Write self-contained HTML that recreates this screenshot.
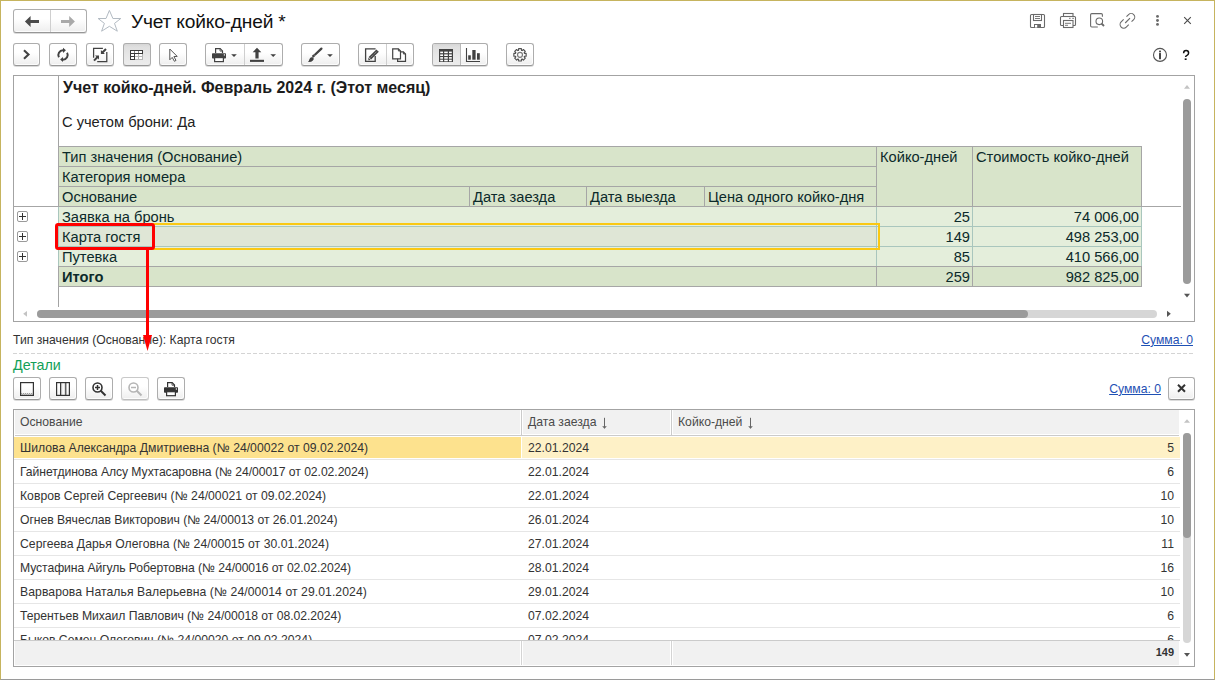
<!DOCTYPE html><html><head><meta charset="utf-8"><style>
*{box-sizing:border-box;margin:0;padding:0}
html,body{width:1215px;height:680px;overflow:hidden;background:#fff;font-family:"Liberation Sans",sans-serif}
.a{position:absolute}
#win{position:absolute;left:0;top:0;width:1215px;height:680px;border-left:1px solid #c6b45e;border-top:1px solid #c6b45e;border-right:1px solid #c6b45e;border-bottom:1px solid #9a9a9a}
.btn{position:absolute;height:23px;border:1px solid #adadad;border-bottom-color:#979797;border-radius:3px;background:linear-gradient(#fff 0,#fff 40%,#eeeeee 100%);box-shadow:inset -1px -1px 0 rgba(255,255,255,.8),0 1px 0 rgba(0,0,0,.14)}
.btn.dis{border-color:#c9c9c9;border-bottom-color:#bdbdbd}
.btn.on{background:linear-gradient(#d6d6d6 0,#dfdfdf 3px,#e6e6e6 50%,#ececec 100%);box-shadow:0 1px 0 rgba(0,0,0,.14)}
.sep{position:absolute;top:0;bottom:0;width:1px;background:#cfcfcf}
.t{position:absolute;white-space:nowrap;line-height:1}
#ov{position:absolute;left:0;top:0}
</style></head><body>
<div id="win"></div>
<div class="btn " style="left:13px;top:9px;width:74px;height:24px"><div class="sep" style="left:36px"></div></div>
<div class="t" style="left:131px;top:11.95px;font-size:19.2px;color:#111;font-weight:400;letter-spacing:-0.2px">Учет койко-дней *</div>
<div class="btn " style="left:13px;top:43px;width:27px;height:23px"></div>
<div class="btn " style="left:49px;top:43px;width:28px;height:23px"></div>
<div class="btn " style="left:86px;top:43px;width:28px;height:23px"></div>
<div class="btn on" style="left:123px;top:43px;width:28px;height:23px"></div>
<div class="btn " style="left:159px;top:43px;width:28px;height:23px"></div>
<div class="btn " style="left:205px;top:43px;width:78px;height:23px"><div class="sep" style="left:38px"></div></div>
<div class="btn " style="left:301px;top:43px;width:39px;height:23px"></div>
<div class="btn " style="left:358px;top:43px;width:56px;height:23px"><div class="sep" style="left:27px"></div></div>
<div class="btn " style="left:432px;top:43px;width:56px;height:23px"><div class="a" style="left:0;top:0;width:27px;height:21px;background:linear-gradient(#d6d6d6 0,#dfdfdf 3px,#e6e6e6 50%,#ececec 100%);border-radius:2px 0 0 2px"></div><div class="sep" style="left:27px;background:#b9b9b9"></div></div>
<div class="btn " style="left:506px;top:43px;width:28px;height:23px"></div>
<div class="a" style="left:13px;top:75px;width:1182px;height:247px;background:#fff;border:1px solid #a3a3a3"></div>
<div class="a" style="left:58px;top:76px;width:1px;height:231px;background:#a3a3a3;"></div>
<div class="t" style="left:63px;top:79.66px;font-size:16px;color:#1c1c1c;font-weight:700;">Учет койко-дней. Февраль 2024 г. (Этот месяц)</div>
<div class="t" style="left:62px;top:114.58px;font-size:14.67px;color:#222;font-weight:400;">С учетом брони: Да</div>
<div class="a" style="left:58px;top:146px;width:1084px;height:141px;background:#d8e4ca;"></div>
<div class="a" style="left:58px;top:146px;width:1084px;height:1px;background:#a6a6a6;"></div>
<div class="a" style="left:13px;top:206px;width:1168px;height:1px;background:#a6a6a6;"></div>
<div class="a" style="left:58px;top:166px;width:818px;height:1px;background:#a6a6a6;"></div>
<div class="a" style="left:58px;top:186px;width:818px;height:1px;background:#a6a6a6;"></div>
<div class="a" style="left:58px;top:146px;width:1px;height:60px;background:#a6a6a6;"></div>
<div class="a" style="left:876px;top:146px;width:1px;height:60px;background:#a6a6a6;"></div>
<div class="a" style="left:972px;top:146px;width:1px;height:60px;background:#a6a6a6;"></div>
<div class="a" style="left:1141px;top:146px;width:1px;height:60px;background:#a6a6a6;"></div>
<div class="a" style="left:469px;top:186px;width:1px;height:20px;background:#a6a6a6;"></div>
<div class="a" style="left:586px;top:186px;width:1px;height:20px;background:#a6a6a6;"></div>
<div class="a" style="left:704px;top:186px;width:1px;height:20px;background:#a6a6a6;"></div>
<div class="t" style="left:62px;top:149.58px;font-size:14.67px;color:#0c2a2a;font-weight:400;">Тип значения (Основание)</div>
<div class="t" style="left:62px;top:169.58px;font-size:14.67px;color:#0c2a2a;font-weight:400;">Категория номера</div>
<div class="t" style="left:62px;top:189.58px;font-size:14.67px;color:#0c2a2a;font-weight:400;">Основание</div>
<div class="t" style="left:473px;top:189.58px;font-size:14.67px;color:#0c2a2a;font-weight:400;">Дата заезда</div>
<div class="t" style="left:590px;top:189.58px;font-size:14.67px;color:#0c2a2a;font-weight:400;">Дата выезда</div>
<div class="t" style="left:708px;top:189.58px;font-size:14.67px;color:#0c2a2a;font-weight:400;">Цена одного койко-дня</div>
<div class="t" style="left:880px;top:149.58px;font-size:14.67px;color:#0c2a2a;font-weight:400;">Койко-дней</div>
<div class="t" style="left:976px;top:149.58px;font-size:14.67px;color:#0c2a2a;font-weight:400;">Стоимость койко-дней</div>
<div class="a" style="left:59px;top:207px;width:1082px;height:59px;background:#e4eedb;"></div>
<div class="a" style="left:59px;top:227px;width:817px;height:19px;background:#dfe6d6;"></div>
<div class="a" style="left:58px;top:226px;width:1083px;height:1px;background:#a9c6bd;"></div>
<div class="a" style="left:58px;top:246px;width:1083px;height:1px;background:#a9c6bd;"></div>
<div class="a" style="left:58px;top:207px;width:1px;height:59px;background:#a9c6bd;"></div>
<div class="a" style="left:876px;top:207px;width:1px;height:59px;background:#a9c6bd;"></div>
<div class="a" style="left:972px;top:207px;width:1px;height:59px;background:#a9c6bd;"></div>
<div class="a" style="left:1141px;top:207px;width:1px;height:59px;background:#a9c6bd;"></div>
<div class="a" style="left:58px;top:266px;width:1084px;height:1px;background:#a6a6a6;"></div>
<div class="a" style="left:58px;top:286px;width:1084px;height:1px;background:#a6a6a6;"></div>
<div class="a" style="left:58px;top:266px;width:1px;height:20px;background:#a6a6a6;"></div>
<div class="a" style="left:876px;top:266px;width:1px;height:20px;background:#a6a6a6;"></div>
<div class="a" style="left:972px;top:266px;width:1px;height:20px;background:#a6a6a6;"></div>
<div class="a" style="left:1141px;top:266px;width:1px;height:20px;background:#a6a6a6;"></div>
<div class="t" style="left:62px;top:209.58px;font-size:14.67px;color:#0c2a2a;font-weight:400;">Заявка на бронь</div>
<div class="t" style="right:245px;top:209.58px;font-size:14.67px;color:#0c2a2a;font-weight:400;">25</div>
<div class="t" style="right:76px;top:209.58px;font-size:14.67px;color:#0c2a2a;font-weight:400;">74 006,00</div>
<div class="a" style="left:17px;top:211px;width:11px;height:11px;border:1px solid #9a9a9a;border-radius:2px;background:#fff"></div>
<div class="a" style="left:19px;top:216px;width:7px;height:1px;background:#333;"></div>
<div class="a" style="left:22px;top:213px;width:1px;height:7px;background:#333;"></div>
<div class="t" style="left:62px;top:229.58px;font-size:14.67px;color:#0c2a2a;font-weight:400;">Карта гостя</div>
<div class="t" style="right:245px;top:229.58px;font-size:14.67px;color:#0c2a2a;font-weight:400;">149</div>
<div class="t" style="right:76px;top:229.58px;font-size:14.67px;color:#0c2a2a;font-weight:400;">498 253,00</div>
<div class="a" style="left:17px;top:231px;width:11px;height:11px;border:1px solid #9a9a9a;border-radius:2px;background:#fff"></div>
<div class="a" style="left:19px;top:236px;width:7px;height:1px;background:#333;"></div>
<div class="a" style="left:22px;top:233px;width:1px;height:7px;background:#333;"></div>
<div class="t" style="left:62px;top:249.58px;font-size:14.67px;color:#0c2a2a;font-weight:400;">Путевка</div>
<div class="t" style="right:245px;top:249.58px;font-size:14.67px;color:#0c2a2a;font-weight:400;">85</div>
<div class="t" style="right:76px;top:249.58px;font-size:14.67px;color:#0c2a2a;font-weight:400;">410 566,00</div>
<div class="a" style="left:17px;top:251px;width:11px;height:11px;border:1px solid #9a9a9a;border-radius:2px;background:#fff"></div>
<div class="a" style="left:19px;top:256px;width:7px;height:1px;background:#333;"></div>
<div class="a" style="left:22px;top:253px;width:1px;height:7px;background:#333;"></div>
<div class="t" style="left:62px;top:269.58px;font-size:14.67px;color:#0c2a2a;font-weight:700;">Итого</div>
<div class="t" style="right:245px;top:269.58px;font-size:14.67px;color:#0c2a2a;font-weight:400;">259</div>
<div class="t" style="right:76px;top:269.58px;font-size:14.67px;color:#0c2a2a;font-weight:400;">982 825,00</div>
<div class="a" style="left:57px;top:223px;width:823px;height:27px;border:2px solid #fac814;border-left:none"></div>
<div class="a" style="left:1183px;top:99px;width:8px;height:185px;background:#9b9b9b;border-radius:4px"></div>
<div class="a" style="left:37px;top:310px;width:1120px;height:8px;background:#d6d6d6;border-radius:4px"></div>
<div class="a" style="left:37px;top:310px;width:991px;height:8px;background:#9b9b9b;border-radius:4px"></div>
<div class="t" style="left:13px;top:333.67px;font-size:12.2px;color:#333;font-weight:400;">Тип значения (Основание): Карта гостя</div>
<div class="t" style="right:22px;top:333.67px;font-size:12.2px;color:#1e50b4;font-weight:400;text-decoration:underline">Сумма: 0</div>
<div class="a" style="left:13px;top:353px;width:1181px;height:1px;background:repeating-linear-gradient(90deg,#d4d4d4 0,#d4d4d4 4px,transparent 4px,transparent 6px);"></div>
<div class="t" style="left:13px;top:358.40px;font-size:14.3px;color:#12a058;font-weight:400;">Детали</div>
<div class="btn " style="left:13px;top:377px;width:28px;height:23px"></div>
<div class="btn " style="left:49px;top:377px;width:28px;height:23px"></div>
<div class="btn " style="left:85px;top:377px;width:28px;height:23px"></div>
<div class="btn dis" style="left:121px;top:377px;width:28px;height:23px"></div>
<div class="btn " style="left:157px;top:377px;width:28px;height:23px"></div>
<div class="t" style="right:54px;top:382.67px;font-size:12.2px;color:#1e50b4;font-weight:400;text-decoration:underline">Сумма: 0</div>
<div class="btn " style="left:1168px;top:377px;width:27px;height:23px"></div>
<div class="a" style="left:13px;top:409px;width:1182px;height:258px;background:#fff;border:1px solid #a3a3a3"></div>
<div class="a" style="left:15px;top:410px;width:1164px;height:24px;background:#f1f1f1;"></div>
<div class="a" style="left:15px;top:435px;width:1164px;height:1px;background:#cbcbcb;"></div>
<div class="a" style="left:520px;top:410px;width:3px;height:25px;background:#fff;"></div>
<div class="a" style="left:521px;top:410px;width:1px;height:25px;background:#cbcbcb;"></div>
<div class="a" style="left:670px;top:410px;width:3px;height:25px;background:#fff;"></div>
<div class="a" style="left:671px;top:410px;width:1px;height:25px;background:#cbcbcb;"></div>
<div class="t" style="left:20px;top:415.67px;font-size:12.2px;color:#4a4a4a;font-weight:400;">Основание</div>
<div class="t" style="left:528px;top:415.67px;font-size:12.2px;color:#4a4a4a;font-weight:400;">Дата заезда</div>
<div class="t" style="left:678px;top:415.67px;font-size:12.2px;color:#4a4a4a;font-weight:400;">Койко-дней</div>
<div class="a" style="left:14px;top:436px;width:1166px;height:204px;overflow:hidden">
<div class="a" style="left:0;top:1px;width:507px;height:21px;background:#fde28e"></div>
<div class="a" style="left:508px;top:1px;width:658px;height:21px;background:#fef1c7"></div>
<div class="a" style="left:0;top:23px;width:1166px;height:1px;background:#e6e6e6"></div>
<div class="t" style="left:6px;top:5.67px;font-size:12.2px;color:#333;letter-spacing:0.007px">Шилова Александра Дмитриевна (№ 24/00022 от 09.02.2024)</div>
<div class="t" style="left:514px;top:5.67px;font-size:12.2px;color:#333">22.01.2024</div>
<div class="t" style="right:6px;top:5.67px;font-size:12.2px;color:#333">5</div>
<div class="a" style="left:0;top:47px;width:1166px;height:1px;background:#e6e6e6"></div>
<div class="t" style="left:6px;top:29.67px;font-size:12.2px;color:#333;letter-spacing:-0.064px">Гайнетдинова Алсу Мухтасаровна (№ 24/00017 от 02.02.2024)</div>
<div class="t" style="left:514px;top:29.67px;font-size:12.2px;color:#333">22.01.2024</div>
<div class="t" style="right:6px;top:29.67px;font-size:12.2px;color:#333">6</div>
<div class="a" style="left:0;top:71px;width:1166px;height:1px;background:#e6e6e6"></div>
<div class="t" style="left:6px;top:53.67px;font-size:12.2px;color:#333;letter-spacing:0.008px">Ковров Сергей Сергеевич (№ 24/00021 от 09.02.2024)</div>
<div class="t" style="left:514px;top:53.67px;font-size:12.2px;color:#333">22.01.2024</div>
<div class="t" style="right:6px;top:53.67px;font-size:12.2px;color:#333">10</div>
<div class="a" style="left:0;top:95px;width:1166px;height:1px;background:#e6e6e6"></div>
<div class="t" style="left:6px;top:77.67px;font-size:12.2px;color:#333;letter-spacing:-0.035px">Огнев Вячеслав Викторович (№ 24/00013 от 26.01.2024)</div>
<div class="t" style="left:514px;top:77.67px;font-size:12.2px;color:#333">26.01.2024</div>
<div class="t" style="right:6px;top:77.67px;font-size:12.2px;color:#333">10</div>
<div class="a" style="left:0;top:119px;width:1166px;height:1px;background:#e6e6e6"></div>
<div class="t" style="left:6px;top:101.67px;font-size:12.2px;color:#333;letter-spacing:0.029px">Сергеева Дарья Олеговна (№ 24/00015 от 30.01.2024)</div>
<div class="t" style="left:514px;top:101.67px;font-size:12.2px;color:#333">27.01.2024</div>
<div class="t" style="right:6px;top:101.67px;font-size:12.2px;color:#333">11</div>
<div class="a" style="left:0;top:143px;width:1166px;height:1px;background:#e6e6e6"></div>
<div class="t" style="left:6px;top:125.67px;font-size:12.2px;color:#333;letter-spacing:-0.087px">Мустафина Айгуль Робертовна (№ 24/00016 от 02.02.2024)</div>
<div class="t" style="left:514px;top:125.67px;font-size:12.2px;color:#333">28.01.2024</div>
<div class="t" style="right:6px;top:125.67px;font-size:12.2px;color:#333">16</div>
<div class="a" style="left:0;top:167px;width:1166px;height:1px;background:#e6e6e6"></div>
<div class="t" style="left:6px;top:149.67px;font-size:12.2px;color:#333;letter-spacing:0.067px">Варварова Наталья Валерьевна (№ 24/00014 от 29.01.2024)</div>
<div class="t" style="left:514px;top:149.67px;font-size:12.2px;color:#333">29.01.2024</div>
<div class="t" style="right:6px;top:149.67px;font-size:12.2px;color:#333">10</div>
<div class="a" style="left:0;top:191px;width:1166px;height:1px;background:#e6e6e6"></div>
<div class="t" style="left:6px;top:173.67px;font-size:12.2px;color:#333;letter-spacing:-0.041px">Терентьев Михаил Павлович (№ 24/00018 от 08.02.2024)</div>
<div class="t" style="left:514px;top:173.67px;font-size:12.2px;color:#333">07.02.2024</div>
<div class="t" style="right:6px;top:173.67px;font-size:12.2px;color:#333">6</div>
<div class="a" style="left:0;top:215px;width:1166px;height:1px;background:#e6e6e6"></div>
<div class="t" style="left:6px;top:197.67px;font-size:12.2px;color:#333;letter-spacing:0.000px">Быков Семен Олегович (№ 24/00020 от 09.02.2024)</div>
<div class="t" style="left:514px;top:197.67px;font-size:12.2px;color:#333">07.02.2024</div>
<div class="t" style="right:6px;top:197.67px;font-size:12.2px;color:#333">6</div>
</div>
<div class="a" style="left:14px;top:640px;width:1166px;height:1px;background:#cbcbcb;"></div>
<div class="a" style="left:15px;top:641px;width:1164px;height:24px;background:#f1f1f1;"></div>
<div class="a" style="left:520px;top:641px;width:3px;height:24px;background:#fff;"></div>
<div class="a" style="left:521px;top:641px;width:1px;height:24px;background:#d4d4d4;"></div>
<div class="a" style="left:670px;top:641px;width:3px;height:24px;background:#fff;"></div>
<div class="a" style="left:671px;top:641px;width:1px;height:24px;background:#d4d4d4;"></div>
<div class="t" style="right:41px;top:646.69px;font-size:11px;color:#333;font-weight:700;">149</div>
<div class="a" style="left:1183px;top:433px;width:8px;height:210px;background:#d6d6d6;border-radius:4px"></div>
<div class="a" style="left:1183px;top:433px;width:8px;height:105px;background:#9b9b9b;border-radius:4px"></div>
<svg id="ov" width="1215" height="680" viewBox="0 0 1215 680"><path d="M24.9 21.4 L30.6 15.9 V19.9 H39 V22.9 H30.6 V26.9 Z" fill="#4b4b4b"/><path d="M74.9 21.4 L69.2 15.9 V19.9 H61 V22.9 H69.2 V26.9 Z" fill="#a9a9a9"/><path d="M109.4 10.4 L112.9 18.5 L120.8 18.5 L114.5 23.4 L117.3 31.2 L109.4 26.3 L101.6 31.2 L104.4 23.4 L98.1 18.5 L106 18.5 Z" fill="none" stroke="#b3bbc3" stroke-width="1" stroke-linejoin="round"/><path d="M1030.5 15.5 Q1030.5 14.5 1031.5 14.5 H1043.5 Q1044.5 14.5 1044.5 15.5 V26.5 Q1044.5 27.5 1043.5 27.5 H1031.5 Q1030.5 27.5 1030.5 26.5 Z" fill="none" stroke="#6a6a6a" stroke-width="1.1"/><rect x="1033.5" y="14.5" width="8" height="6" fill="none" stroke="#6a6a6a" stroke-width="1.1"/><path d="M1035 16.5 H1040 M1035 18.5 H1040" stroke="#6a6a6a" stroke-width="0.9"/><rect x="1034" y="24" width="7" height="3.5" fill="#6a6a6a"/><rect x="1035" y="25" width="2.2" height="2.5" fill="#fff"/><rect x="1063.5" y="13.5" width="9.5" height="3" fill="none" stroke="#6a6a6a" stroke-width="1.1"/><path d="M1063.5 25.5 H1061.5 Q1060.5 25.5 1060.5 24.5 V17.5 Q1060.5 16.5 1061.5 16.5 H1074.5 Q1075.5 16.5 1075.5 17.5 V24.5 Q1075.5 25.5 1074.5 25.5 H1073" fill="none" stroke="#6a6a6a" stroke-width="1.1"/><rect x="1063.5" y="20.5" width="9.5" height="7" fill="#fff" stroke="#6a6a6a" stroke-width="1.1"/><path d="M1065 23.3 H1071 M1065 25.3 H1068 M1069 18.3 H1070.6 M1072.2 18.3 H1074" stroke="#6a6a6a" stroke-width="0.9"/><path d="M1097.8 27 H1091.8 Q1090.6 27 1090.6 25.8 V14.8 Q1090.6 13.6 1091.8 13.6 H1101.2 Q1102.4 13.6 1102.4 14.8 V16.8" fill="none" stroke="#6a6a6a" stroke-width="1.1"/><circle cx="1099.3" cy="21.3" r="3.3" fill="none" stroke="#6a6a6a" stroke-width="1.1"/><path d="M1101.6 23.6 L1104 26" stroke="#6a6a6a" stroke-width="1.9"/><g transform="translate(1127.6 20.6) rotate(-45)" fill="none" stroke="#6a6a6a" stroke-width="1.1"><path d="M2 -3.6 H5 A3.6 3.6 0 0 1 5 3.6 H2"/><path d="M-2 -3.6 H-5.5 A3.6 3.6 0 0 0 -5.5 3.6 H-2"/><path d="M-3.4 0 H3.4"/></g><circle cx="1157.5" cy="16.4" r="1.45" fill="#6a6a6a"/><circle cx="1157.5" cy="20.5" r="1.45" fill="#6a6a6a"/><circle cx="1157.5" cy="24.4" r="1.45" fill="#6a6a6a"/><path d="M1184.2 17.2 L1190.8 23.8 M1190.8 17.2 L1184.2 23.8" stroke="#4a4a4a" stroke-width="1.1"/><path d="M24 50.3 L28.5 54.5 L24 58.7" fill="none" stroke="#424242" stroke-width="2.1"/><path d="M63.6 50.3 H63 A4.7 4.7 0 0 0 58.93 57.35" fill="none" stroke="#424242" stroke-width="2"/><path d="M63 47.7 V52.9 L65.9 50.3 Z" fill="#424242"/><path d="M62.4 59.7 H63 A4.7 4.7 0 0 0 67.07 52.65" fill="none" stroke="#424242" stroke-width="2"/><path d="M63 56.9 V62.1 L60.1 59.5 Z" fill="#424242"/><path d="M93.6 57.8 V48.3 H102.9 M106.8 52 V61.5 H97.2" fill="none" stroke="#424242" stroke-width="1.25"/><path d="M106 49 L102.2 52.8" stroke="#424242" stroke-width="2"/><path d="M100.9 50.1 V54.1 H104.9 Z" fill="#424242"/><path d="M94 60.6 L97.8 56.8" stroke="#424242" stroke-width="2"/><path d="M99 59.6 V55.6 H95 Z" fill="#424242"/><rect x="130" y="50" width="13" height="10" fill="#fff"/><rect x="134" y="53" width="9" height="7" fill="#b5b5b5"/><rect x="135" y="54" width="3" height="2" fill="#fff"/><rect x="139" y="54" width="3" height="2" fill="#fff"/><rect x="135" y="57" width="3" height="2" fill="#fff"/><rect x="139" y="57" width="3" height="2" fill="#fff"/><path d="M130 50 H143 V54 H130 Z M131 51 V53 H142 V51 Z" fill="#3a3a3a" fill-rule="evenodd"/><path d="M130 53 H135 V60 H130 Z M131 54 V56 H134 V54 Z M131 57 V59 H134 V57 Z" fill="#3a3a3a" fill-rule="evenodd"/><rect x="134" y="51" width="1" height="2" fill="#888"/><rect x="138" y="51" width="1" height="2" fill="#888"/><path d="M169.8 49 V59.8 L172.2 57.4 L174.4 61.3 L176 60.4 L173.9 56.6 L177.2 56.4 Z" fill="#fff" stroke="#555" stroke-width="1" stroke-linejoin="round"/><path d="M215.6 53.0 V48.6 H220.2 L222.5 50.900000000000006 V53.0" fill="#fff" stroke="#424242" stroke-width="1.2"/><path d="M220 48.800000000000004 V51.1 H222.3" fill="none" stroke="#424242" stroke-width="0.8"/><rect x="212" y="53.2" width="14" height="5.4" rx="0.8" fill="#424242"/><rect x="214.6" y="57.6" width="8.8" height="4" fill="#fff" stroke="#424242" stroke-width="1.2"/><rect x="223.8" y="54.300000000000004" width="1.2" height="1.2" fill="#fff"/><path d="M231.2 54.3 H236.8 L234 57 Z" fill="#404040"/><path d="M257 47.8 L261.3 52.2 H258.6 V58.6 H255.4 V52.2 H252.7 Z" fill="#424242"/><rect x="250" y="59.8" width="14" height="2.1" fill="#424242"/><path d="M270.4 54.3 H276 L273.2 57 Z" fill="#404040"/><path d="M321.4 48.6 L315.2 54.5" stroke="#424242" stroke-width="2.3" stroke-linecap="round"/><path d="M314.4 55.1 L312.6 56.9" stroke="#424242" stroke-width="2.4"/><path d="M312.3 57 Q309.8 57.2 309.4 59.3 Q309.1 61 308 61.9 Q311.3 62.2 312.9 60.4 Q314.2 59 313.6 58.2 Z" fill="#424242"/><path d="M327.2 54.3 H332.8 L330 57 Z" fill="#404040"/><path d="M375.2 56 V61.4 H365.6 V48.9 H375.6" fill="none" stroke="#424242" stroke-width="1.3"/><path d="M377.6 50.6 L369.9 58.3" stroke="#424242" stroke-width="3.4" stroke-linecap="butt"/><path d="M377.6 50.6 L369.9 58.3" stroke="#bbb" stroke-width="0.9" stroke-dasharray="1 1"/><path d="M368.3 57.6 L370.6 59.9 L368.4 60.3 Z" fill="#424242"/><path d="M397.6 51.9 H403.4 L405.5 54 V61.4 H397.6 Z" fill="#fff" stroke="#424242" stroke-width="1.2"/><path d="M403.4 51.9 V54 H405.5" fill="none" stroke="#424242" stroke-width="0.9"/><path d="M392.7 48.9 H398.4 L400.5 51 V58.8 H392.7 Z" fill="#fff" stroke="#424242" stroke-width="1.2"/><path d="M398.4 48.9 V51 H400.5" fill="none" stroke="#424242" stroke-width="0.9"/><rect x="439" y="49" width="14" height="13" fill="#424242"/><rect x="440.2" y="51.6" width="2.8" height="1.6" fill="#fff"/><rect x="440.2" y="54.4" width="2.8" height="1.6" fill="#fff"/><rect x="440.2" y="57.1" width="2.8" height="1.6" fill="#fff"/><rect x="440.2" y="59.7" width="2.8" height="1.6" fill="#fff"/><rect x="444.2" y="51.6" width="3.6" height="1.6" fill="#fff"/><rect x="444.2" y="54.4" width="3.6" height="1.6" fill="#fff"/><rect x="444.2" y="57.1" width="3.6" height="1.6" fill="#fff"/><rect x="444.2" y="59.7" width="3.6" height="1.6" fill="#fff"/><rect x="449" y="51.6" width="2.8" height="1.6" fill="#fff"/><rect x="449" y="54.4" width="2.8" height="1.6" fill="#fff"/><rect x="449" y="57.1" width="2.8" height="1.6" fill="#fff"/><rect x="449" y="59.7" width="2.8" height="1.6" fill="#fff"/><path d="M466.5 48 V61.5 H480" fill="none" stroke="#424242" stroke-width="1.1"/><rect x="468.2" y="55.3" width="2.6" height="4.4" fill="#424242"/><rect x="472.3" y="50" width="3.3" height="9.7" fill="#424242"/><rect x="477" y="53.2" width="2.8" height="6.5" fill="#424242"/><path d="M518.55 50.33 L518.64 48.65 L521.36 48.65 L521.45 50.33 A4.7 4.7 0 0 1 522.13 50.61 L523.38 49.49 L525.31 51.42 L524.19 52.67 A4.7 4.7 0 0 1 524.47 53.35 L526.15 53.44 L526.15 56.16 L524.47 56.25 A4.7 4.7 0 0 1 524.19 56.93 L525.31 58.18 L523.38 60.11 L522.13 58.99 A4.7 4.7 0 0 1 521.45 59.27 L521.36 60.95 L518.64 60.95 L518.55 59.27 A4.7 4.7 0 0 1 517.87 58.99 L516.62 60.11 L514.69 58.18 L515.81 56.93 A4.7 4.7 0 0 1 515.53 56.25 L513.85 56.16 L513.85 53.44 L515.53 53.35 A4.7 4.7 0 0 1 515.81 52.67 L514.69 51.42 L516.62 49.49 L517.87 50.61 A4.7 4.7 0 0 1 518.55 50.33 Z" fill="none" stroke="#505050" stroke-width="1.15" stroke-linejoin="round"/><circle cx="520" cy="54.8" r="2.5" fill="none" stroke="#7a7a7a" stroke-width="1.2"/><circle cx="1160" cy="54.9" r="6.5" fill="none" stroke="#555" stroke-width="1.1"/><rect x="1159.1" y="52.8" width="1.8" height="6.5" rx="0.4" fill="#333"/><rect x="1159.1" y="50.6" width="1.8" height="1.6" rx="0.4" fill="#333"/><path d="M1183.6 53.2 Q1183.6 50.6 1186.1 50.6 Q1188.6 50.6 1188.6 53 Q1188.6 54.4 1187 55.4 Q1185.6 56.1 1185.6 56.9" fill="none" stroke="#111" stroke-width="1.5"/><rect x="1184.7" y="58.4" width="1.9" height="1.6" fill="#111"/><rect x="56.5" y="224.5" width="97" height="24" rx="1.8" fill="none" stroke="#ff0000" stroke-width="3"/><rect x="146" y="250" width="3" height="86" fill="#ff0000"/><path d="M143 335 H152 L147.5 351 Z" fill="#ff0000"/><path d="M1184 88.7 L1187 85 L1190 88.7 Z" fill="#c3c3c3"/><path d="M1184 293.8 H1190 L1187 297.5 Z" fill="#555"/><path d="M27 311 V316.7 L23.2 313.85 Z" fill="#c3c3c3"/><path d="M1167 310.8 V316.9 L1170.8 313.85 Z" fill="#555"/><rect x="20.6" y="382.6" width="12.8" height="12.8" fill="none" stroke="#333" stroke-width="1.2"/><path d="M21.2 393.5 H33" stroke="#888" stroke-width="1" stroke-dasharray="1 1"/><path d="M21.7 394.5 H33" stroke="#999" stroke-width="1" stroke-dasharray="1 1"/><defs><linearGradient id="mg" x1="0" x2="1"><stop offset="0" stop-color="#ccc"/><stop offset=".5" stop-color="#fff"/><stop offset="1" stop-color="#ccc"/></linearGradient></defs><rect x="61" y="383" width="4.4" height="12" fill="url(#mg)"/><rect x="56.6" y="382.6" width="12.8" height="12.8" fill="none" stroke="#333" stroke-width="1.2"/><path d="M60.6 382.6 V395.4 M65.8 382.6 V395.4" stroke="#333" stroke-width="1.1"/><circle cx="97.5" cy="387.5" r="4.5" fill="#fff" stroke="#333" stroke-width="1.6"/><path d="M100.5 390.5 L105.5 395.5" stroke="#333" stroke-width="2"/><path d="M95 387.5 H100 M97.5 385 V390" stroke="#333" stroke-width="1.5"/><circle cx="133.5" cy="387.5" r="4.5" fill="#fff" stroke="#b5b5b5" stroke-width="1.6"/><path d="M136.5 390.5 L141.5 395.5" stroke="#b5b5b5" stroke-width="2"/><path d="M131 387.5 H136" stroke="#b5b5b5" stroke-width="1.5"/><path d="M167.6 387.1 V382.7 H172.2 L174.5 385.0 V387.1" fill="#fff" stroke="#333" stroke-width="1.2"/><path d="M172 382.90000000000003 V385.2 H174.3" fill="none" stroke="#333" stroke-width="0.8"/><rect x="164" y="387.3" width="14" height="5.4" rx="0.8" fill="#333"/><rect x="166.6" y="391.7" width="8.8" height="4" fill="#fff" stroke="#333" stroke-width="1.2"/><rect x="175.8" y="388.40000000000003" width="1.2" height="1.2" fill="#fff"/><path d="M1178 384.8 L1185 391.8 M1185 384.8 L1178 391.8" stroke="#333" stroke-width="2"/><path d="M604.5 417.8 V428.2" stroke="#666" stroke-width="1"/><path d="M602.2 426.3 H606.8 L604.5 428.8 Z" fill="#666"/><path d="M750.5 417.8 V428.2" stroke="#666" stroke-width="1"/><path d="M748.2 426.3 H752.8 L750.5 428.8 Z" fill="#666"/><path d="M1184 422.8 L1187 419.2 L1190 422.8 Z" fill="#c3c3c3"/><path d="M1184 653 H1190 L1187 656.8 Z" fill="#555"/></svg>
</body></html>
